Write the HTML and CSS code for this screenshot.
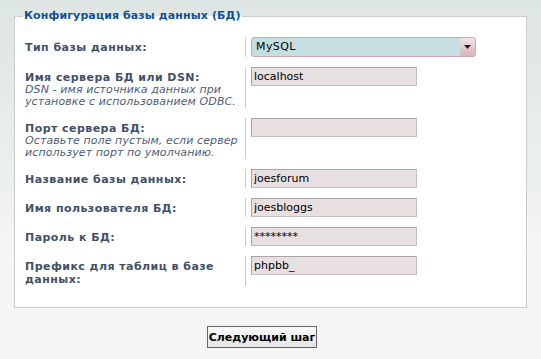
FILE: index.html
```html
<!DOCTYPE html>
<html lang="ru">
<head>
    <meta charset="UTF-8">
    <title>Конфигурация базы данных</title>
    <link rel="stylesheet" href="styles.css">
</head>
<body>
    <form class="install-form">
        <fieldset class="panel">
            <legend>Конфигурация базы данных (БД)</legend>

            <div class="row">
                <div class="label">Тип базы данных:</div>
                <div class="field">
                    <div class="select">
                        <span class="select-value">MySQL</span>
                        <span class="select-arrow">
                            <svg width="7" height="4" viewBox="0 0 7 4"><path d="M0 0h7L3.5 4z" fill="#222"/></svg>
                        </span>
                    </div>
                </div>
            </div>

            <div class="row">
                <div class="label">
                    Имя сервера БД или DSN:
                    <span class="explain">DSN - имя источника данных при установке с использованием ODBC.</span>
                </div>
                <div class="field"><input class="inputbox" type="text" value="localhost"></div>
            </div>

            <div class="row">
                <div class="label">
                    Порт сервера БД:
                    <span class="explain">Оставьте поле пустым, если сервер использует порт по умолчанию.</span>
                </div>
                <div class="field"><input class="inputbox" type="text" value=""></div>
            </div>

            <div class="row">
                <div class="label">Название базы данных:</div>
                <div class="field"><input class="inputbox" type="text" value="joesforum"></div>
            </div>

            <div class="row">
                <div class="label">Имя пользователя БД:</div>
                <div class="field"><input class="inputbox" type="text" value="joesbloggs"></div>
            </div>

            <div class="row">
                <div class="label">Пароль к БД:</div>
                <div class="field"><input class="inputbox" type="text" value="********"></div>
            </div>

            <div class="row">
                <div class="label">Префикс для таблиц в базе данных:</div>
                <div class="field"><input class="inputbox" type="text" value="phpbb_"></div>
            </div>
        </fieldset>

        <div class="submit-row">
            <button type="button" class="button">Следующий шаг</button>
        </div>
    </form>
</body>
</html>
```

FILE: styles.css
```css
body {
    margin: 0;
    font-family: "DejaVu Sans", Verdana, sans-serif;
    font-size: 11px;
    background: linear-gradient(to bottom, #dde5e5 0, #e6ebeb 110px, #f5f5f5 260px, #f5f5f5 100%);
    min-height: 359px;
}
.install-form {
    padding: 0 14px 0 14px;
}
.panel {
    margin: 8px 0 0 0;
    padding: 13px 10px 21px 10px;
    border: 1px solid #cccccc;
    background: #ffffff;
    min-width: 0;
}
.panel legend {
    padding: 0 1px;
    margin-left: -2px;
    font-size: 11px;
    font-weight: bold;
    color: #115098;
    line-height: 16px;
    letter-spacing: 0.1px;
}
.row {
    display: flex;
    margin-bottom: 10px;
}
.row:last-child {
    margin-bottom: 0;
}
.label {
    width: 220px;
    padding-top: 4px;
    font-weight: bold;
    color: #425067;
    line-height: 13px;
    letter-spacing: 0.45px;
}
.explain {
    display: block;
    font-weight: normal;
    font-style: italic;
    font-size: 11px;
    line-height: 12px;
    letter-spacing: 0.1px;
    color: #4c5d77;
}
.field {
    border-left: 1px solid #cccccc;
    padding-left: 5px;
}
.inputbox {
    display: block;
    box-sizing: border-box;
    width: 166px;
    height: 19px;
    margin: 0;
    padding: 0 2px;
    font-family: "DejaVu Sans", Verdana, sans-serif;
    font-size: 11px;
    color: #000000;
    background: #e7dfe0;
    border: 1px solid;
    border-color: #a8a4a4 #c8c0c2 #c8c0c2 #a8a4a4;
}
.select {
    display: flex;
    box-sizing: border-box;
    width: 225px;
    height: 20px;
    border: 1px solid #d2a6b0;
    border-radius: 3px;
    background: #c5dfe0;
    overflow: hidden;
}
.select-value {
    flex: 1;
    padding: 2px 0 0 4px;
    font-size: 11px;
    letter-spacing: 0.4px;
    color: #000000;
}
.select-arrow {
    display: flex;
    align-items: center;
    justify-content: center;
    width: 15px;
    border-left: 1px solid #e8d4d8;
    background: linear-gradient(to bottom, #f3e4e7, #d6b4bc);
}
.submit-row {
    text-align: center;
    padding: 18px 17px 0 0;
}
.button {
    box-sizing: border-box;
    height: 22px;
    padding: 0 1px;
    white-space: nowrap;
    font-family: "DejaVu Sans", Verdana, sans-serif;
    font-size: 11px;
    font-weight: bold;
    color: #000000;
    border: 1px solid #666666;
    background: linear-gradient(to bottom, #fafafa, #e4e4e4);
}
```
